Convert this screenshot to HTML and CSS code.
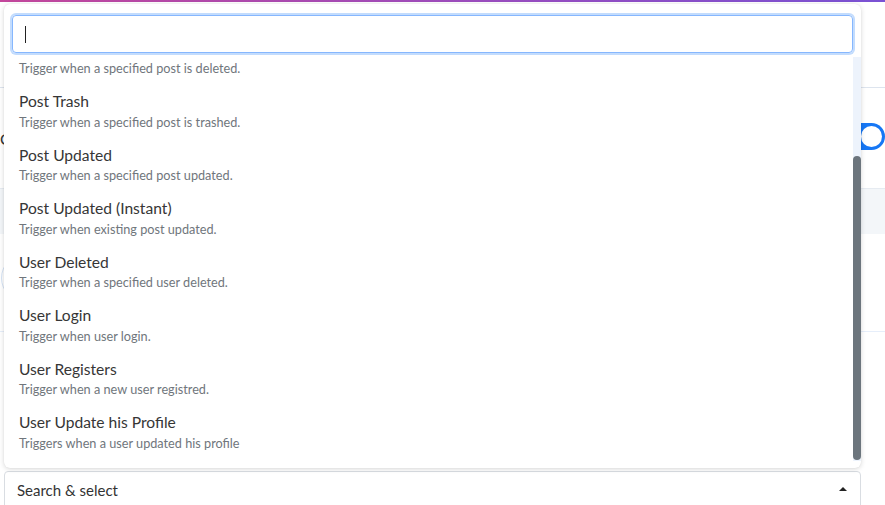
FILE: index.html
```html
<!DOCTYPE html>
<html lang="en">
<head>
<meta charset="utf-8">
<title>Trigger</title>
<link rel="stylesheet" href="styles.css">
</head>
<body>
  <div class="topbar"></div>

  <div class="bg-head"></div>
  <div class="bg-row">
    <span class="bg-label">Connection</span>
    <span class="toggle"><span class="knob"></span></span>
  </div>
  <div class="bg-band"></div>
  <div class="bg-section"><span class="avatar"></span></div>
  <div class="bg-gap"></div>

  <div class="picker">
    <div class="dropdown">
      <div class="search"><span class="text-caret"></span></div>
      <div class="list-wrap">
        <ul class="options" id="options">
          <li class="option"><div class="opt-title">Post Created</div><div class="opt-desc">Trigger when a new post is created.</div></li>
          <li class="option"><div class="opt-title">Post Deleted</div><div class="opt-desc">Trigger when a specified post is deleted.</div></li>
          <li class="option"><div class="opt-title">Post Trash</div><div class="opt-desc">Trigger when a specified post is trashed.</div></li>
          <li class="option"><div class="opt-title">Post Updated</div><div class="opt-desc">Trigger when a specified post updated.</div></li>
          <li class="option"><div class="opt-title">Post Updated (Instant)</div><div class="opt-desc">Trigger when existing post updated.</div></li>
          <li class="option"><div class="opt-title">User Deleted</div><div class="opt-desc">Trigger when a specified user deleted.</div></li>
          <li class="option"><div class="opt-title">User Login</div><div class="opt-desc">Trigger when user login.</div></li>
          <li class="option"><div class="opt-title">User Registers</div><div class="opt-desc">Trigger when a new user registred.</div></li>
          <li class="option"><div class="opt-title">User Update his Profile</div><div class="opt-desc">Triggers when a user updated his profile</div></li>
        </ul>
        <div class="scroll-track"><div class="scroll-thumb"></div></div>
      </div>
    </div>
    <div class="select">
      <span class="select-text">Search &amp; select</span>
      <span class="select-arrow"></span>
    </div>
  </div>

  <script src="script.js"></script>
</body>
</html>
```

FILE: styles.css
```css
* { box-sizing: border-box; }

html, body {
  margin: 0;
  padding: 0;
  background: #fff;
  overflow: hidden;
}

body {
  font-family: Lato, "Open Sans", "Liberation Sans", sans-serif;
  color: #333;
  width: 885px;
  height: 505px;
}

.topbar {
  height: 2px;
  background: linear-gradient(to right, #c4479c, #9a4dbf 55%, #7a52d4);
}

/* page underneath the open dropdown */
.bg-head {
  height: 86px;
  border-bottom: 1px solid #dde4ee;
}

.bg-row {
  height: 100px;
  display: flex;
  align-items: center;
  justify-content: space-between;
}

.bg-label {
  font-size: 16px;
  color: #333;
}

.toggle {
  width: 48px;
  height: 27px;
  border-radius: 14px;
  background: #1677f5;
  display: flex;
  align-items: center;
  justify-content: flex-end;
  padding: 0 3px;
  margin-top: -3px;
}

.knob {
  width: 21px;
  height: 21px;
  border-radius: 50%;
  background: #fff;
}

.bg-band {
  height: 46px;
  background: #f3f6f9;
  border-top: 1px solid #e6ebf1;
}

.bg-section {
  height: 98px;
  border-bottom: 1px solid #e6eefa;
  display: flex;
  align-items: center;
  padding-left: 1px;
}

.avatar {
  width: 48px;
  height: 48px;
  border-radius: 50%;
  border: 1px solid #d6e4f6;
  margin-top: -10px;
}

.bg-gap {
  height: 139px;
}

/* the select and its dropdown */
.picker {
  position: relative;
  margin-left: 4px;
  width: 857px;
}

.select {
  height: 40px;
  border: 1px solid #d9dde2;
  border-radius: 4px;
  background: #fff;
  display: flex;
  align-items: flex-start;
  justify-content: space-between;
  padding: 8px 13px 0 12px;
}

.select-text {
  font-size: 15px;
  line-height: 20px;
  color: #333;
}

.select-arrow {
  width: 0;
  height: 0;
  margin-top: 7px;
  border-left: 4px solid transparent;
  border-right: 4px solid transparent;
  border-bottom: 4px solid #222;
}

.dropdown {
  position: absolute;
  left: 0;
  right: 0;
  bottom: calc(100% + 3px);
  height: 464px;
  background: #fff;
  border-radius: 6px;
  box-shadow: 0 1px 5px rgba(0, 0, 0, 0.16), 0 0 1px rgba(0, 0, 0, 0.08);
  padding: 11px 0 6px;
  display: flex;
  flex-direction: column;
  gap: 4px;
}

.search {
  height: 38px;
  margin: 0 8px;
  border: 1px solid #86b7fe;
  border-radius: 4px;
  box-shadow: 0 0 0 2px #c3dcfd;
  display: flex;
  align-items: center;
  padding-left: 12px;
}

.text-caret {
  width: 1px;
  height: 17px;
  background: #222;
}

.list-wrap {
  height: 404px;
  display: flex;
}

.options {
  flex: 1;
  list-style: none;
  margin: 0;
  padding: 4px 0;
  overflow: hidden;
}

.scroll-track {
  width: 8px;
  background: #edf3fc;
  display: flex;
  flex-direction: column;
  justify-content: flex-end;
  padding-bottom: 1px;
}

.scroll-thumb {
  height: 304px;
  background: #6c757d;
  border-radius: 4px;
}

.option {
  padding: 8px 15px 4.5px;
}

.opt-title {
  font-size: 15.6px;
  line-height: 22px;
  color: #363636;
}

.opt-desc {
  margin-top: 1.5px;
  font-size: 12.7px;
  line-height: 17.5px;
  color: #70767c;
}
```

FILE: script.js
```js
// Keep the option list scrolled to its last entries.
const options = document.getElementById('options');
options.scrollTop = options.scrollHeight;
```
